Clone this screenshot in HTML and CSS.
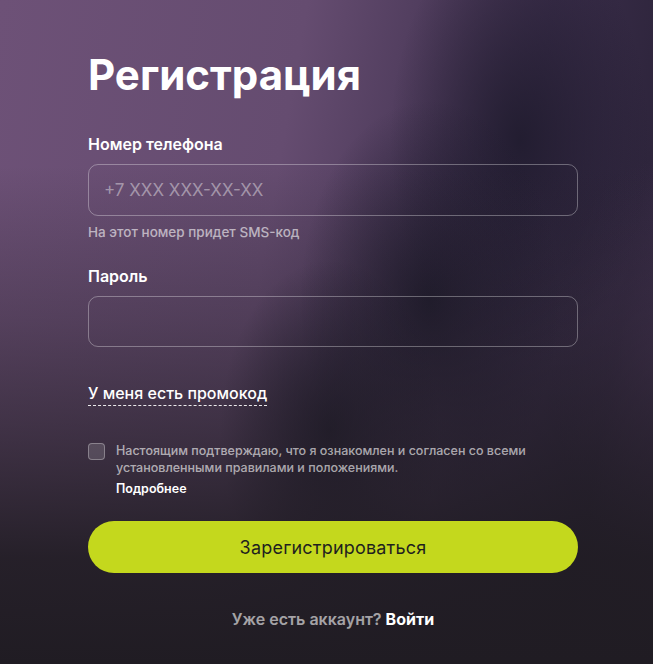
FILE: index.html
```html
<!DOCTYPE html>
<html lang="ru">
<head>
<meta charset="utf-8">
<title>Регистрация</title>
<link rel="stylesheet" href="styles.css">
</head>
<body>
<main class="page">
  <form class="form">
    <h1 class="title">Регистрация</h1>

    <div class="field">
      <label class="label">Номер телефона</label>
      <div class="input"><span class="placeholder">+7 XXX XXX-XX-XX</span></div>
      <div class="hint">На этот номер придет SMS-код</div>
    </div>

    <div class="field field-pass">
      <label class="label">Пароль</label>
      <div class="input"></div>
    </div>

    <div class="promo"><span class="promo-link">У меня есть промокод</span></div>

    <div class="agree">
      <span class="checkbox"></span>
      <div class="agree-text">
        <p class="agree-main">Настоящим подтверждаю, что я ознакомлен и согласен со всеми установленными правилами и положениями.</p>
        <p class="agree-more">Подробнее</p>
      </div>
    </div>

    <button type="button" class="submit">Зарегистрироваться</button>

    <p class="login">Уже есть аккаунт? <b class="login-link">Войти</b></p>
  </form>
</main>
</body>
</html>
```

FILE: styles.css
```css
* { box-sizing: border-box; }
html, body { margin: 0; padding: 0; height: 100%; }
body {
  font-family: Inter, Roboto, "Liberation Sans", sans-serif;
  color: #fff;
  background-color: #221d27;
  background-image:
    linear-gradient(180deg, rgba(32,28,35,0) 25%, rgba(32,28,35,0.3) 48%, rgba(32,28,35,0.6) 66%, rgba(32,28,35,0.92) 84%, #201c23 100%),
    radial-gradient(ellipse 110px 170px at 330px 430px, rgba(28,25,42,0.85), rgba(28,25,42,0) 100%),
    radial-gradient(ellipse 130px 200px at 430px 300px, rgba(28,25,42,0.9), rgba(28,25,42,0) 100%),
    radial-gradient(ellipse 130px 220px at 520px 140px, rgba(30,26,44,0.85), rgba(30,26,44,0) 100%),
    radial-gradient(ellipse 110px 200px at 660px 360px, rgba(70,52,84,0.7), rgba(70,52,84,0) 100%),
    linear-gradient(100deg, #6d5177 0%, #654c70 40%, #3a2d4a 72%, #2e253c 88%, #3a2d48 100%);
  overflow: hidden;
}
.page {
  width: 653px;
  height: 664px;
  padding: 0 75px 0 88px;
}
.form {
  width: 490px;
  display: flex;
  flex-direction: column;
  padding-top: 51px;
}
.title {
  margin: 0;
  font-size: 42px;
  font-weight: 700;
  line-height: 48px;
  letter-spacing: 0;
}
.field {
  display: flex;
  flex-direction: column;
  margin-top: 35px;
}
.field-pass { margin-top: 26px; }
.label {
  font-size: 16px;
  font-weight: 600;
  line-height: 20px;
}
.input {
  margin-top: 10px;
  height: 52px;
  border: 1px solid rgba(255,255,255,0.32);
  border-radius: 10px;
  display: flex;
  align-items: center;
  padding: 0 15px;
}
.field-pass .input { height: 51px; }
.placeholder {
  font-size: 17px;
  color: rgba(255,255,255,0.42);
}
.hint {
  margin-top: 8px;
  font-size: 13.5px;
  line-height: 16px;
  font-weight: 500;
  color: rgba(255,255,255,0.6);
}
.promo {
  margin-top: 36px;
  display: flex;
}
.promo-link {
  font-size: 16px;
  font-weight: 500;
  line-height: 20px;
  padding-bottom: 2px;
  border-bottom: 1px dashed rgba(255,255,255,0.9);
}
.agree {
  margin-top: 36px;
  display: flex;
  gap: 11px;
}
.checkbox {
  flex: none;
  width: 17px;
  height: 17px;
  margin-top: 1px;
  border-radius: 4px;
  border: 1px solid rgba(255,255,255,0.3);
  background: rgba(255,255,255,0.14);
}
.agree-text p { margin: 0; }
.agree-main {
  font-size: 12.5px;
  line-height: 17px;
  font-weight: 500;
  color: rgba(255,255,255,0.62);
}
.agree-more {
  margin-top: 5px !important;
  font-size: 12.5px;
  line-height: 16px;
  font-weight: 600;
  color: #fff;
}
.submit {
  margin-top: 24px;
  height: 52px;
  border: 0;
  border-radius: 26px;
  background: #c4d81d;
  color: #1f1f1f;
  font-family: inherit;
  font-size: 18px;
  letter-spacing: 0.2px;
}
.login {
  margin: 36px 0 0;
  text-align: center;
  font-size: 16px;
  font-weight: 600;
  line-height: 20px;
  color: rgba(255,255,255,0.6);
}
.login-link { color: #fff; font-weight: 700; }
```
